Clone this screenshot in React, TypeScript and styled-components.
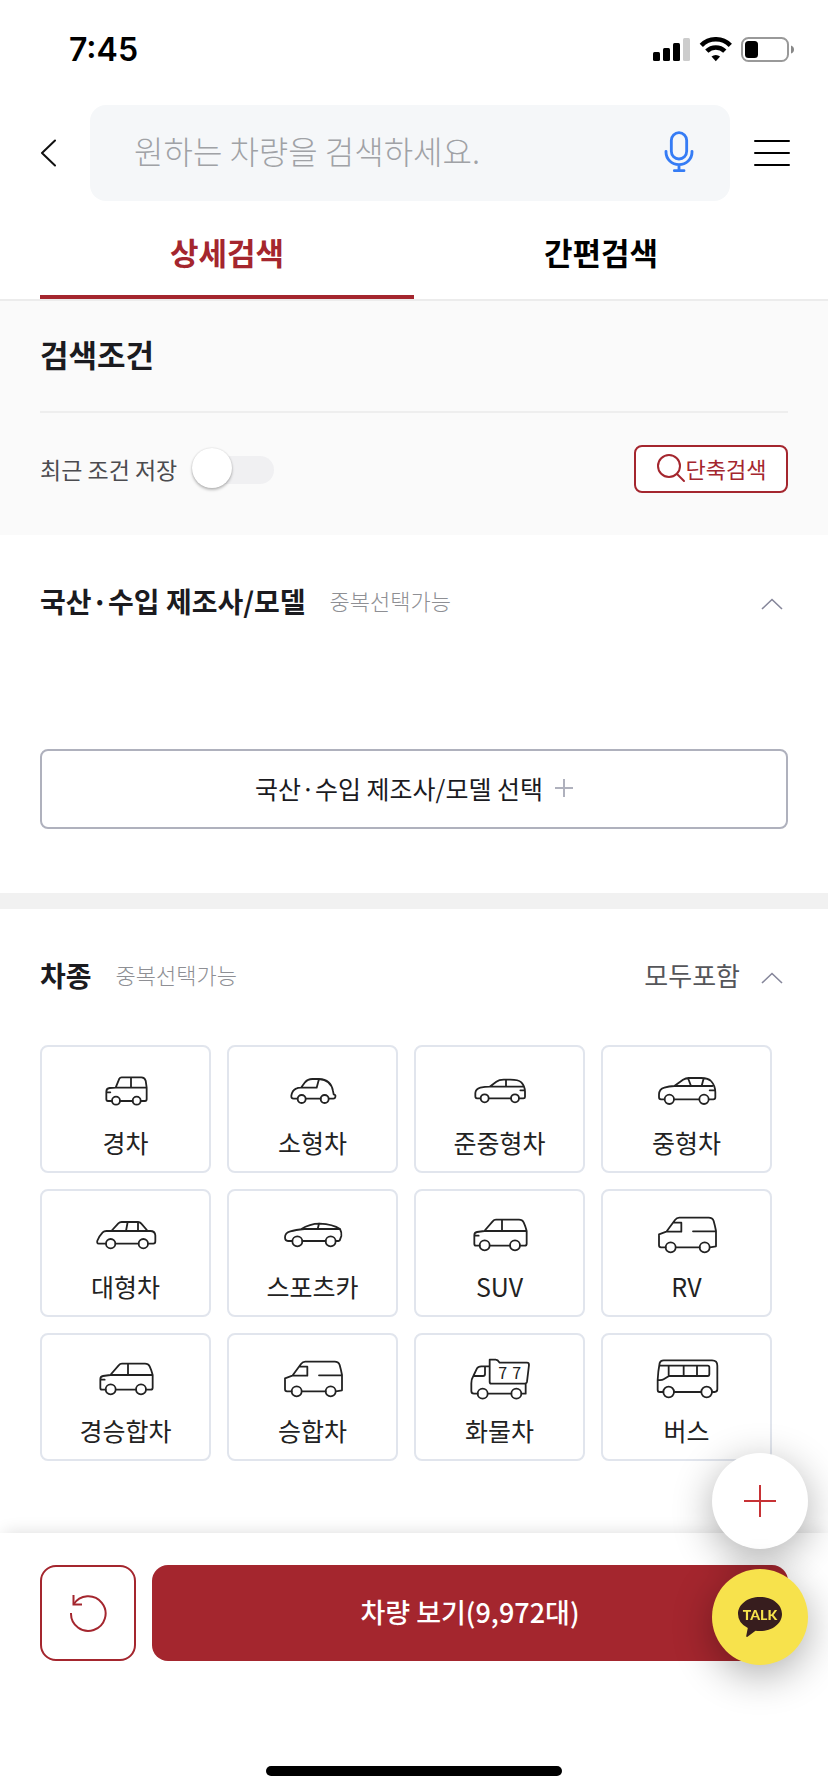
import React, { useState } from 'react';
import styled, { createGlobalStyle, css } from 'styled-components';

const RED = '#a4262e';
const INK = '#1b1b1f';

const GlobalStyle = createGlobalStyle`
  *, *::before, *::after { box-sizing: border-box; }
  body {
    margin: 0;
    background: #fff;
    color: ${INK};
    font-family: "Noto Sans CJK KR", "Noto Sans", sans-serif;
  }
  button {
    margin: 0;
    padding: 0;
    border: 0;
    background: none;
    color: inherit;
    font: inherit;
    cursor: pointer;
  }
  svg { display: block; }
`;

const Page = styled.div`
  display: flex;
  flex-direction: column;
  min-height: 100vh;
`;

/* Status bar */

const StatusBar = styled.div`
  display: flex;
  align-items: center;
  justify-content: space-between;
  height: 99px;
  padding: 0 34px 0 69px;
`;

const Clock = styled.time`
  font-family: Inter, sans-serif;
  font-size: 32px;
  font-weight: 600;
  line-height: 40px;
  color: #000;
`;

/* Search header */

const SearchHeader = styled.header`
  display: flex;
  align-items: center;
  gap: 24px;
  padding: 6px 38px 0 40px;
`;

const BackButton = styled.button`
  flex: none;
  width: 26px;
  height: 48px;
`;

const MenuButton = styled.button`
  flex: none;
  width: 36px;
  height: 48px;
  display: grid;
  place-items: center;
`;

const SearchBox = styled.div`
  display: flex;
  align-items: center;
  flex: 1;
  min-width: 0;
  height: 96px;
  padding: 0 36px 2px 44px;
  border-radius: 16px;
  background: #f5f7f9;
`;

const SearchInput = styled.input`
  flex: 1;
  min-width: 0;
  padding: 0 0 4px;
  border: 0;
  outline: 0;
  background: none;
  color: ${INK};
  font-family: inherit;
  font-size: 32px;
  font-weight: 300;
  line-height: 48px;
  &::placeholder { color: #a0a2a6; opacity: 1; }
`;

/* Tabs */

const Tabs = styled.div`
  display: flex;
  padding: 0 40px;
  border-bottom: 2px solid #ececec;
`;

const Tab = styled.button<{ $active: boolean }>`
  flex: 1;
  height: 98px;
  padding-top: 8px;
  border-bottom: 4px solid ${(p) => (p.$active ? RED : 'transparent')};
  color: ${(p) => (p.$active ? RED : '#000')};
  font-size: 31px;
  font-weight: 700;
  line-height: 48px;
`;

/* Search conditions */

const Conditions = styled.section`
  padding: 0 40px;
  background: #fafafa;
`;

const ConditionsTitle = styled.h1`
  margin: 0;
  padding: 29px 0 33px;
  border-bottom: 2px solid #eee;
  font-size: 31px;
  font-weight: 700;
  line-height: 48px;
`;

const ConditionsRow = styled.div`
  display: flex;
  align-items: center;
  justify-content: space-between;
  padding: 31px 0 41px;
`;

const SaveLabel = styled.label`
  display: flex;
  align-items: center;
  gap: 15px;
  color: #4b4b4f;
  font-size: 23px;
  line-height: 50px;
`;

const Switch = styled.input`
  position: relative;
  appearance: none;
  width: 82px;
  height: 28px;
  margin: 2px 0 0;
  border-radius: 14px;
  background: #f0f0f2;
  cursor: pointer;
  &::before {
    content: "";
    position: absolute;
    top: -8px;
    left: 0;
    width: 40px;
    height: 40px;
    border-radius: 50%;
    background: #fff;
    box-shadow: 0 2px 3px rgba(0, 0, 0, 0.25), 0 0 2px rgba(0, 0, 0, 0.15);
  }
  &:checked { background: ${RED}; }
  &:checked::before { left: 42px; }
`;

const QuickSearch = styled.button`
  display: flex;
  align-items: center;
  justify-content: center;
  width: 154px;
  height: 48px;
  padding-bottom: 3px;
  border: 2px solid ${RED};
  border-radius: 8px;
  background: #fff;
  color: ${RED};
  font-size: 22px;
  line-height: 32px;
`;

/* Filter sections */

const Section = styled.section<{ $divided?: boolean }>`
  padding: 0 40px;
  ${(p) =>
    p.$divided &&
    css`
      border-bottom: 16px solid #f1f1f1;
    `}
`;

const SectionHeader = styled.div`
  display: flex;
  align-items: center;
  padding: 40px 0 44px;
  line-height: 52px;
`;

const SectionTitle = styled.h2`
  margin: 0;
  font-size: 28px;
  font-weight: 700;
`;

const Hint = styled.span`
  margin-left: 24px;
  padding-bottom: 2px;
  color: #8e8f94;
  font-size: 22px;
  font-weight: 300;
  line-height: 50px;
`;

const Summary = styled.span`
  margin-left: auto;
  color: #55565a;
  font-size: 26px;
`;

const Toggle = styled.button`
  display: grid;
  place-items: center;
  width: 32px;
  height: 52px;
  margin-left: auto;
  padding-top: 6px;
  ${Summary} + & { margin-left: 16px; }
`;

const ModelButton = styled.button`
  display: flex;
  align-items: center;
  justify-content: center;
  gap: 12px;
  width: 100%;
  height: 80px;
  margin: 78px 0 64px;
  padding-bottom: 2px;
  border: 2px solid #afb1bd;
  border-radius: 8px;
  font-size: 25px;
  line-height: 40px;
`;

const CarGrid = styled.div`
  display: grid;
  grid-template-columns: repeat(4, 1fr);
  gap: 16px;
  padding: 0 16px 72px 0;
`;

const CarCard = styled.button`
  display: flex;
  flex-direction: column;
  align-items: center;
  height: 128px;
  padding-top: 22px;
  border: 2px solid #e1e5ed;
  border-radius: 8px;
  background: #fff;
  color: #222;
  font-size: 25px;
  line-height: 40px;
  gap: 9px;
`;

/* Bottom bar */

const BottomBar = styled.footer`
  position: sticky;
  bottom: 0;
  margin-top: auto;
  padding: 32px 40px 16px;
  background: #fff;
  box-shadow: 0 -4px 16px -4px rgba(0, 0, 0, 0.14);
`;

const Actions = styled.div`
  display: flex;
  gap: 16px;
  margin-bottom: 105px;
`;

const ResetButton = styled.button`
  display: grid;
  place-items: center;
  flex: none;
  width: 96px;
  height: 96px;
  border: 2px solid ${RED};
  border-radius: 16px;
`;

const ViewButton = styled.button`
  flex: 1;
  height: 96px;
  padding-bottom: 2px;
  border-radius: 16px;
  background: ${RED};
  color: #fff;
  font-size: 27px;
  font-weight: 500;
  line-height: 40px;
`;

const HomeIndicator = styled.div`
  width: 296px;
  height: 10px;
  margin: 0 auto;
  border-radius: 5px;
  background: #000;
`;

const FloatingStack = styled.div`
  position: fixed;
  right: 20px;
  bottom: 127px;
  display: flex;
  flex-direction: column;
  gap: 20px;
`;

const FloatingButton = styled.button<{ $fill: string }>`
  display: grid;
  place-items: center;
  width: 96px;
  height: 96px;
  border-radius: 50%;
  background: ${(p) => p.$fill};
  box-shadow: 0 10px 40px rgba(0, 0, 0, 0.32);
`;

/* Icons */

const StatusIcons = () => (
  <svg width="141" height="25" viewBox="0 0 141 25" aria-hidden="true">
    <rect x="0" y="15" width="7" height="9" rx="1.5" />
    <rect x="10" y="11" width="7" height="13" rx="1.5" />
    <rect x="20" y="6" width="7" height="18" rx="1.5" />
    <rect x="30" y="1" width="7" height="23" rx="1.5" fill="#ccc" />
    <g fill="none" stroke="#000" strokeWidth="4.6">
      <path d="M48.300 8.300A20.500 20.500 0 0 1 77.300 8.300" />
      <path d="M53.800 14.200A12.800 12.800 0 0 1 71.800 14.200" />
    </g>
    <path d="M58.500 19.600A6.500 6.500 0 0 1 67.100 19.600L62.800 24.200Z" />
    <rect x="89" y="1" width="46" height="23" rx="6.500" fill="none" stroke="#999" strokeWidth="2" />
    <rect x="92" y="4" width="13" height="17" rx="3.500" />
    <path d="M138 8.500Q141 9.500 141 12.500T138 16.500Z" fill="#888" />
  </svg>
);

const BackIcon = () => (
  <svg width="16" height="28" viewBox="0 0 16 28" fill="none" stroke="#111" strokeWidth="2" strokeLinecap="round" strokeLinejoin="round" aria-hidden="true">
    <path d="M15 1.500L2 14L15 26.500" />
  </svg>
);

const MenuIcon = () => (
  <svg width="36" height="28" viewBox="0 0 36 28" stroke="#000" strokeWidth="2" strokeLinecap="round" aria-hidden="true">
    <path d="M1 2H35M1 14H35M1 26H35" />
  </svg>
);

const MicIcon = () => (
  <svg width="30" height="42" viewBox="69 333 90 126" fill="none" stroke="#357cf5" strokeWidth="8.5" strokeLinecap="round" aria-hidden="true">
    <rect x="91" y="338" width="46" height="79" rx="23" />
    <path d="M75 394V397A39 37 0 0 0 153 397V394M114 434V451M100 452H129" />
  </svg>
);

const SearchIcon = () => (
  <svg width="30" height="30" viewBox="0 0 30 30" fill="none" stroke={RED} strokeWidth="2" strokeLinecap="round" aria-hidden="true">
    <circle cx="13" cy="13" r="11" />
    <path d="M21 21L28 28" />
  </svg>
);

const ChevronUp = () => (
  <svg width="22" height="12" viewBox="0 0 22 12" fill="none" stroke="#85869a" strokeWidth="1.6" aria-hidden="true">
    <path d="M1 11L11 1.500L21 11" />
  </svg>
);

const PlusIcon = ({ size, color, weight }: { size: number; color: string; weight: number }) => (
  <svg width={size} height={size} viewBox={`0 0 ${size} ${size}`} stroke={color} strokeWidth={weight} aria-hidden="true">
    <path d={`M0 ${size / 2}H${size}M${size / 2} 0V${size}`} />
  </svg>
);

const ResetIcon = () => (
  <svg width="38" height="38" viewBox="0 0 38 38" fill="none" stroke={RED} strokeWidth="2" aria-hidden="true">
    <path d="M2 19A17.300 17.300 0 1 0 4.500 10.600" />
    <path d="M4.500 1V10.600H13" />
  </svg>
);

const TalkIcon = () => (
  <svg width="44" height="40" viewBox="0 0 44 40" aria-hidden="true">
    <path fill="#371d1e" d="M22 0C34.500 0 44 7.500 44 17S34.500 34 22 34Q19.500 34 17.500 33.700L9.500 39.700Q8 40.500 8.300 38.500L9.800 31Q0 26 0 17C0 7.500 9.500 0 22 0Z" />
    <text x="22" y="22.500" textAnchor="middle" fill="#f7e24c" fontFamily="Lato, sans-serif" fontSize="14" fontWeight="900">
      TALK
    </text>
  </svg>
);

type CarArt = { origin: string; wheels: [number, number][]; radius: number; path: string; marks?: [number, number][] };

const suv: CarArt = {
  origin: '179 99',
  wheels: [[223, 196], [314, 196]],
  radius: 15,
  path: 'M222 153L247 124Q251 119 257 119H326Q336 119 340 127Q346 140 349 153V191Q349 197 343 197H330M299 197H240M208 197H197Q192 197 192 192V166Q192 157 200 156L222 153H349M275 119V153M192 167H205',
};

const van: CarArt = {
  origin: '740 99',
  wheels: [[781, 202], [883, 202]],
  radius: 15,
  path: 'M768 155L794 120Q799 113 807 113H895Q907 113 910 123Q914 137 917 153V199L899 202M868 202H797M766 202H752Q746 202 746 196V163L768 155H813V128H789M848 154H917',
};

const cars: { name: string; art: CarArt }[] = [
  {
    name: '경차',
    art: {
      origin: '197 102',
      wheels: [[257, 197], [319, 197]],
      radius: 12,
      path: 'M256 158L267 131Q269 127 274 127H333Q343 127 346 137L349 158V193Q349 198 344 198H332M307 198H269M244 198H233Q228 198 228 193V170Q228 160 238 159L256 158H349M302 127V158M228 172H240',
    },
  },
  {
    name: '소형차',
    art: {
      origin: '758 102',
      wheels: [[814, 192], [883, 192]],
      radius: 12,
      path: 'M812 158L824 142Q832 132 846 132H866Q902 134 908 168L910 178Q917 180 915 186Q914 191 909 191H896M871 191H827M801 191H790Q782 191 783 182Q786 166 797 161Q802 158 812 158H859L866 132',
    },
  },
  {
    name: '준중형차',
    art: {
      origin: '179 102',
      wheels: [[223, 190], [314, 190]],
      radius: 12,
      path: 'M238 155L258 140Q266 134 280 134H300Q324 134 333 142Q344 154 344 170V186Q344 190 339 190H328M302 190H236M210 190H200Q195 190 195 184V174Q196 162 210 158Q224 155 238 155H338M287 134V155M330 166H343',
    },
  },
  {
    name: '중형차',
    art: {
      origin: '740 102',
      wheels: [[777, 193], [881, 193]],
      radius: 14,
      path: 'M792 153L818 134Q826 129 836 129H872Q895 130 902 138Q915 152 915 172V187Q915 193 909 193H896M866 193H792M762 193H752Q746 193 746 187V178Q747 162 762 158Q776 153 792 153H906M833 129L842 153M880 130L874 153M898 166H913',
    },
  },
  {
    name: '대형차',
    art: {
      origin: '197 99',
      wheels: [[241, 191], [339, 191]],
      radius: 14,
      path: 'M243 153L264 130Q268 126 274 126H322Q329 126 333 131L352 153M226 191H205Q199 191 201 182Q205 170 217 157Q221 153 228 153H360Q374 153 375 166V184Q375 191 369 191H354M324 191H256M292 126L287 153M323 126V153',
    },
  },
  {
    name: '스포츠카',
    art: {
      origin: '758 99',
      wheels: [[801, 184], [901, 184]],
      radius: 15,
      path: 'M812 148Q838 131 868 131Q908 133 929 147H822M786 183H773Q764 183 764 172Q764 158 780 154Q795 150 822 147M929 147Q935 158 933 168L929 179Q928 183 920 183H916M886 183H816M866 131L862 147',
    },
  },
  { name: 'SUV', art: suv },
  { name: 'RV', art: van },
  { name: '경승합차', art: suv },
  { name: '승합차', art: van },
  {
    name: '화물차',
    art: {
      origin: '179 96',
      wheels: [[217, 206], [318, 206]],
      radius: 15,
      path: 'M238 124H213Q203 124 200 130L189 153Q183 162 183 175V198Q183 206 191 206H202M190 153H218Q224 153 224 147V124M238 104H256Q262 104 268 113H350Q356 113 356 120L350 170Q349 176 343 176H243Q238 176 238 171V104ZM346 176V206H334M303 206H233',
      marks: [[277, 163], [319, 163]],
    },
  },
  {
    name: '버스',
    art: {
      origin: '740 96',
      wheels: [[775, 201], [889, 201]],
      radius: 16,
      path: 'M742 194V165Q743 140 748 114Q751 106 760 106H905Q921 106 921 122V193Q921 201 913 201H906M872 201H792M759 201H748Q742 201 742 194M749 122H892Q897 122 897 127V148Q897 153 892 153H776L760 163Q755 166 743 165M775 122V153M820 122V153M860 122V153',
    },
  },
];

const CarIcon = ({ art }: { art: CarArt }) => (
  <svg width="60" height="44" viewBox={`${art.origin} 180 132`} overflow="visible" fill="none" stroke="#222" strokeWidth="5.4" strokeLinejoin="round" strokeLinecap="round" aria-hidden="true">
    <path d={art.path} />
    {art.wheels.map(([x, y]) => (
      <circle key={x} cx={x} cy={y} r={art.radius} />
    ))}
    {art.marks?.map(([x, y]) => (
      <text key={x} x={x} y={y} textAnchor="middle" fill="#222" stroke="none" fontSize="48">
        7
      </text>
    ))}
  </svg>
);

export default function App() {
  const [tab, setTab] = useState(0);
  const [selected, setSelected] = useState<string[]>([]);

  const toggleCar = (name: string) =>
    setSelected((list) => (list.includes(name) ? list.filter((n) => n !== name) : [...list, name]));

  return (
    <Page>
      <GlobalStyle />
      <StatusBar>
        <Clock>7:45</Clock>
        <StatusIcons />
      </StatusBar>

      <SearchHeader>
        <BackButton aria-label="뒤로">
          <BackIcon />
        </BackButton>
        <SearchBox>
          <SearchInput type="text" aria-label="차량 검색" placeholder="원하는 차량을 검색하세요." />
          <button aria-label="음성 검색">
            <MicIcon />
          </button>
        </SearchBox>
        <MenuButton aria-label="메뉴">
          <MenuIcon />
        </MenuButton>
      </SearchHeader>

      <Tabs role="tablist">
        {['상세검색', '간편검색'].map((label, i) => (
          <Tab key={label} role="tab" aria-selected={tab === i} $active={tab === i} onClick={() => setTab(i)}>
            {label}
          </Tab>
        ))}
      </Tabs>

      <Conditions>
        <ConditionsTitle>검색조건</ConditionsTitle>
        <ConditionsRow>
          <SaveLabel>
            최근 조건 저장
            <Switch type="checkbox" />
          </SaveLabel>
          <QuickSearch>
            <SearchIcon />
            단축검색
          </QuickSearch>
        </ConditionsRow>
      </Conditions>

      <Section $divided>
        <SectionHeader>
          <SectionTitle>국산·수입 제조사/모델</SectionTitle>
          <Hint>중복선택가능</Hint>
          <Toggle aria-label="제조사/모델 접기">
            <ChevronUp />
          </Toggle>
        </SectionHeader>
        <ModelButton>
          국산·수입 제조사/모델 선택
          <PlusIcon size={18} color="#afb1bd" weight={2} />
        </ModelButton>
      </Section>

      <Section>
        <SectionHeader>
          <SectionTitle>차종</SectionTitle>
          <Hint>중복선택가능</Hint>
          <Summary>모두포함</Summary>
          <Toggle aria-label="차종 접기">
            <ChevronUp />
          </Toggle>
        </SectionHeader>
        <CarGrid>
          {cars.map(({ name, art }) => (
            <CarCard key={name} aria-pressed={selected.includes(name)} onClick={() => toggleCar(name)}>
              <CarIcon art={art} />
              {name}
            </CarCard>
          ))}
        </CarGrid>
      </Section>

      <BottomBar>
        <Actions>
          <ResetButton aria-label="초기화">
            <ResetIcon />
          </ResetButton>
          <ViewButton>차량 보기(9,972대)</ViewButton>
        </Actions>
        <HomeIndicator />
      </BottomBar>

      <FloatingStack>
        <FloatingButton $fill="#fff" aria-label="더보기">
          <PlusIcon size={32} color="#c73235" weight={2} />
        </FloatingButton>
        <FloatingButton $fill="#f7e24c" aria-label="카카오톡 상담">
          <TalkIcon />
        </FloatingButton>
      </FloatingStack>
    </Page>
  );
}
